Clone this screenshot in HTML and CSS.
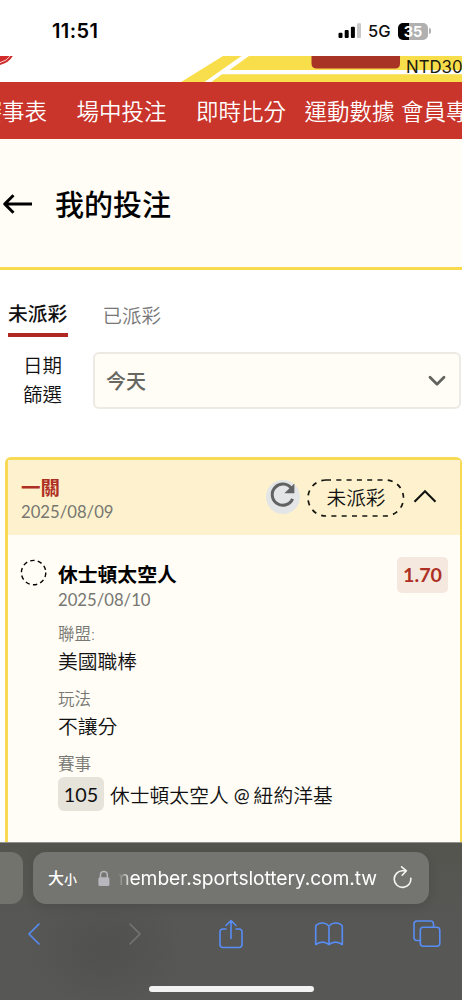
FILE: index.html
```html
<!DOCTYPE html>
<html lang="zh-Hant">
<head>
<meta charset="utf-8">
<meta name="viewport" content="width=device-width, initial-scale=1">
<title>我的投注</title>
<link rel="stylesheet" href="styles.css">
</head>
<body>
<div class="phone">
  <header class="status">
    <span class="clock">11:51</span>
    <div class="signals">
      <svg class="bars" width="24" height="16" viewBox="0 0 24 16"><rect x="0.5" y="9.7" width="4" height="5.3" rx="1"/><rect x="6.7" y="7" width="4" height="8" rx="1"/><rect x="12.9" y="3.7" width="4" height="11.3" rx="1"/><rect class="weak" x="19" y="0.3" width="4" height="14.7" rx="1"/></svg>
      <span class="network">5G</span>
      <span class="battery">35</span>
      <span class="battery-tip"></span>
    </div>
  </header>
  <div class="banner">
    <svg class="banner-art" width="462" height="27" viewBox="0 0 462 27">
      <path d="M179.5 27 223 0H241.5L203 27zM249 0 229.5 14H462V0zM210 27 222 18.3H462V27z" fill="#f9de4b"/>
      <path d="M0 9Q9 6.8 12.8 0H0z" fill="#d22b2b"/>
      <path d="M0 6.6Q7 4.8 10.2 0" fill="none" stroke="#f7d7d2" stroke-width="1"/>
      <path d="M311.5 0H400V7.5Q400 12.5 395 12.5H317Q311.5 12.5 311.5 7.5z" fill="#a83426"/>
    </svg>
    <span class="balance">NTD30</span>
  </div>
  <nav class="nav">
    <a>賽事表</a><a>場中投注</a><a>即時比分</a><a class="stats">運動數據</a><a class="member">會員專區</a>
  </nav>
  <section class="heading">
    <svg width="31" height="22" viewBox="0 0 31 22"><path d="M30 11H3M11.5 2.2 2.7 11l8.8 8.8" fill="none" stroke="#000" stroke-width="3" stroke-linejoin="round"/></svg>
    <h1>我的投注</h1>
  </section>
  <main class="content">
    <div class="tabs">
      <span class="tab active">未派彩</span>
      <span class="tab">已派彩</span>
    </div>
    <div class="filter">
      <span class="filter-label">日期<br>篩選</span>
      <div class="select">
        <span>今天</span>
        <svg width="18" height="12" viewBox="0 0 18 12"><path d="M2 2.2 9 9.2 16 2.2" fill="none" stroke="#63635f" stroke-width="2.8" stroke-linecap="round" stroke-linejoin="round"/></svg>
      </div>
    </div>
    <article class="card">
      <div class="card-head">
        <div class="card-title"><b>一關</b><span class="date">2025/08/09</span></div>
        <span class="refresh"><svg width="34" height="34" viewBox="0 0 34 34"><path d="M25.4 8.4A10.6 10.6 0 1 0 26.6 18.8" fill="none" stroke="#626262" stroke-width="3"/><path d="M28.4 3.6V13.2H18.4z" fill="#626262"/></svg></span>
        <span class="pill"><svg width="98" height="39" viewBox="0 0 98 39"><rect x="1" y="1" width="95.5" height="36" rx="18" fill="none" stroke="#151510" stroke-width="1.7" stroke-dasharray="5 5.3"/></svg><span>未派彩</span></span>
        <svg class="collapse" width="24" height="15" viewBox="0 0 24 15"><path d="M1.5 12.7 12 2.2 22.5 12.7" fill="none" stroke="#111" stroke-width="2.1"/></svg>
      </div>
      <div class="bet">
        <svg class="state" width="28" height="28" viewBox="0 0 28 28"><circle cx="13.6" cy="13.6" r="12.2" fill="none" stroke="#000" stroke-width="1.4" stroke-dasharray="4.4 3.27"/></svg>
        <div class="bet-body">
          <div class="team">休士頓太空人</div>
          <div class="date">2025/08/10</div>
          <div class="label league">聯盟:</div>
          <div class="value">美國職棒</div>
          <div class="label">玩法</div>
          <div class="value">不讓分</div>
          <div class="label">賽事</div>
          <div class="match"><span class="code">105</span><span>休士頓太空人</span><span class="at">@</span><span>紐約洋基</span></div>
        </div>
        <span class="odds">1.70</span>
      </div>
    </article>
  </main>
  <footer class="browser">
    <div class="address-row">
      <div class="previous-page"></div>
      <div class="address">
        <span class="text-size">大<small>小</small></span>
        <svg class="lock" width="12" height="17" viewBox="0 0 12 17"><path d="M2.5 8V4.8a3.4 3.4 0 0 1 6.8 0V8" fill="none" stroke="#b9b7be" stroke-width="1.5"/><rect x="0.4" y="7.2" width="11" height="8.8" rx="1.5" fill="#b9b7be"/></svg>
        <span class="url"><span>member.sportslottery.com.tw</span></span>
        <svg class="reload" width="20" height="24" viewBox="0 0 20 24"><path d="M17.8 12.3A8.3 8.3 0 1 1 9.5 4.8H13.2M8.6 0.8 13.4 4.8 9.2 9.2" fill="none" stroke="#f5f5f4" stroke-width="1.6" stroke-linecap="round" stroke-linejoin="round"/></svg>
      </div>
    </div>
    <div class="tools">
      <svg width="14" height="24" viewBox="0 0 14 24"><path d="M12 2 2 12 12 22"/></svg>
      <svg class="disabled" width="14" height="24" viewBox="0 0 14 24"><path d="M2 2 12 12 2 22"/></svg>
      <svg class="share" width="26" height="32" viewBox="0 0 26 32"><path d="M8 11H5Q2 11 2 14V26.5Q2 29.5 5 29.5H21Q24 29.5 24 26.5V14Q24 11 21 11H18M13 20.5V2.5M8 7.5 13 2.5 18 7.5"/></svg>
      <svg class="book" width="30" height="26" viewBox="0 0 30 26"><path d="M15 5C12 1.5 6 1 2.5 4Q1.7 4.6 1.7 5.6V23.5C6 20.5 11 20.5 15 23.5C19 20.5 24 20.5 28.3 23.5V5.6Q28.3 4.6 27.5 4C24 1 18 1.5 15 5zM15 5V23.5"/></svg>
      <svg class="pages" width="28" height="28" viewBox="0 0 28 28"><path d="M7.5 20.5H4Q1 20.5 1 17.5V4Q1 1 4 1H17.5Q20.5 1 20.5 4V7.3"/><rect x="7.3" y="7.3" width="19.5" height="19" rx="3"/></svg>
    </div>
    <div class="home-bar"></div>
  </footer>
</div>
</body>
</html>
```
FILE: styles.css
```css
* { box-sizing: border-box; }
body { margin: 0; background: #fff; color: #111; font-family: Lato, "Noto Sans CJK TC", sans-serif; }
svg { display: block; flex: none; }
.phone { width: 462px; height: 1000px; overflow: hidden; display: flex; flex-direction: column; white-space: nowrap; }

.status { height: 55px; flex: none; display: flex; justify-content: space-between; padding: 7px 31px 0 52px; align-items: center; font-family: Inter, sans-serif; }
.clock { font-size: 20px; font-weight: 600; letter-spacing: 0.4px; color: #000; }
.signals { display: flex; align-items: center; }
.weak { fill: #c9c9c9; }
.network { font-size: 16.5px; font-weight: 500; margin-left: 6px; width: 30px; }
.battery { width: 30px; height: 17px; border-radius: 5px; background: linear-gradient(90deg, #000 36%, #b0b0b0 36%); color: #fff; font-size: 14.5px; font-weight: 700; line-height: 17px; text-align: center; }
.battery-tip { width: 2px; height: 6px; margin-left: 1px; background: #b0b0b0; border-radius: 0 2px 2px 0; }

.banner { height: 27px; flex: none; position: relative; overflow: hidden; }
.banner-art { margin-top: 0.5px; }
.balance { position: absolute; left: 406px; top: 2px; font: 16.8px/20px Inter, sans-serif; color: #19190c; }

.nav { height: 57px; flex: none; display: flex; align-items: center; gap: 29.5px; margin-left: -20.5px; padding-bottom: 2px; background: #c9342b; color: #fff; font-size: 22.5px; font-weight: 350; }
.nav a { flex: none; }
.nav .stats { margin-left: -11px; }
.nav .member { margin-left: -23px; }

.heading { height: 131px; flex: none; display: flex; align-items: center; gap: 22px; padding: 0 0 0 2px; background: #fffdf5; border-bottom: 3px solid #f9da4f; }
.heading svg { margin-top: 2px; }
.heading h1 { margin: 0; font-size: 29px; font-weight: 500; color: #000; }

.content { flex: 1; min-height: 0; overflow: hidden; padding-top: 28px; }
.tabs { display: flex; gap: 34.5px; padding-left: 8px; height: 39px; align-items: flex-start; }
.tab { font-size: 19.5px; line-height: 35px; height: 39px; font-weight: 350; color: #777; }
.tab.active { width: 60px; font-size: 19.8px; line-height: 31px; font-weight: 500; color: #111; border-bottom: 4px solid #b02820; }
.filter { display: flex; margin-top: 15px; height: 57px; }
.filter-label { width: 93px; padding-left: 23px; font-size: 19.5px; line-height: 28.5px; font-weight: 350; }
.select { width: 368px; border: 2px solid #ebeae4; border-radius: 6px; background: #fffdf5; display: flex; align-items: center; justify-content: space-between; padding: 0 13px 0 11px; font-size: 20px; font-weight: 500; color: #666662; }

.card { margin: 48px 0 0 5px; width: 457px; height: 400px; border: 3px solid #f7d953; border-right-width: 2px; border-radius: 6px; background: #fffdf5; }
.card-head { height: 75px; display: flex; align-items: center; padding-left: 13px; background: #fdf2cd; }
.card-title { width: 245px; display: flex; flex-direction: column; font-size: 19.5px; line-height: 25px; color: #ae3024; padding-top: 5px; }
.card-title b { font-weight: 700; }
.date { font-size: 16.7px; line-height: 25px; color: #777671; }
.refresh { width: 34px; height: 34px; border-radius: 50%; background: #e4e5e6; margin-top: -2px; }
.pill { position: relative; width: 98px; height: 39px; margin-left: 7px; font-size: 19.7px; line-height: 40px; text-align: center; font-weight: 350; }
.pill > svg { position: absolute; left: 0; top: 1px; }
.collapse { margin: -2px 0 0 8px; }
.bet { display: flex; padding: 22px 12px 0 12px; align-items: flex-start; }
.state { margin-top: 2px; }
.bet-body { flex: 1; padding-left: 10px; }
.team { font-size: 19.8px; line-height: 32px; padding-top: 1px; font-weight: 700; color: #000; }
.bet-body .date { line-height: 20px; }
.label { font-size: 16.5px; line-height: 24px; margin-top: 11.5px; font-weight: 350; color: #777773; }
.value { font-size: 19.8px; line-height: 30px; margin-top: -0.5px; font-weight: 350; }
.league { margin-top: 12px; }
.match { display: flex; align-items: center; font-size: 19.8px; font-weight: 350; height: 36px; }
.code { width: 46px; height: 34px; line-height: 35px; text-align: center; border-radius: 6px; background: #e6e3db; margin-right: 6px; font-weight: 400; }
.at { margin: 0 4px 0 5px; font-size: 19px; font-weight: 400; }
.odds { width: 51px; height: 36px; border-radius: 5px; background: #f5e8df; color: #ae3024; font-size: 19.7px; font-weight: 700; line-height: 36px; text-align: center; }

.browser { height: 158px; flex: none; background: radial-gradient(ellipse 80px 60px at 23% 68%, #50504f, transparent), linear-gradient(#55554f, #575756 60%); border-top: 1px solid #92928d; }
.address-row { display: flex; gap: 10px; padding-top: 9px; }
.previous-page { width: 23px; height: 52px; border-radius: 0 12px 12px 0; background: #73736e; }
.address { width: 396px; height: 52px; border-radius: 13px; background: #747470; display: flex; align-items: center; padding-left: 15px; color: #fff; box-shadow: 0 2px 12px rgba(0,0,0,.12); }
.text-size { width: 50px; font-size: 16px; font-weight: 500; line-height: 24px; }
.text-size small { font-size: 13px; }
.url { width: 259px; margin-left: 8px; overflow: hidden; display: flex; justify-content: flex-end; font: 19.3px/30px Inter, sans-serif; letter-spacing: -0.1px; -webkit-mask: linear-gradient(90deg, transparent, #000 14px); mask: linear-gradient(90deg, transparent, #000 14px); }
.reload { margin-left: 16px; }
.tools { height: 60px; display: flex; align-items: center; padding-left: 27px; }
.tools svg { fill: none; stroke: #578df5; stroke-width: 1.6; stroke-linecap: round; stroke-linejoin: round; }
.tools .disabled { stroke: #747474; margin-left: 87px; }
.tools .share { margin-left: 76px; }
.tools .book { margin-left: 70px; }
.tools .pages { margin-left: 69px; }
.home-bar { width: 165px; height: 6px; border-radius: 3px; margin: 22px auto 0; background: #f2f2f2; }
```
